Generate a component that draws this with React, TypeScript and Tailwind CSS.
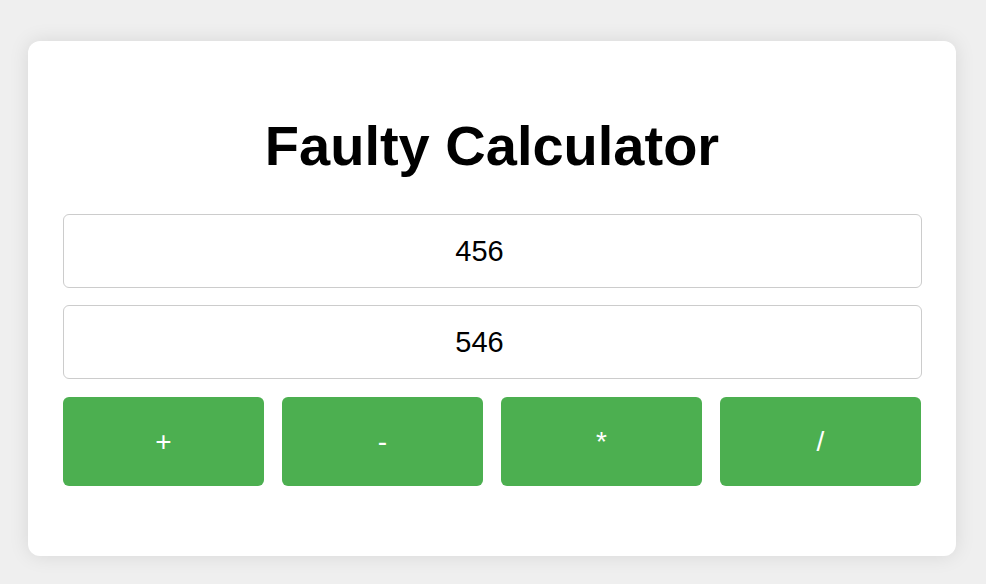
import { useState } from "react";

const ops = ["+", "-", "*", "/"];

export default function App() {
  const [a, setA] = useState("456");
  const [b, setB] = useState("546");

  return (
    <div
      className="min-h-screen bg-[#efefef] pt-[41px]"
      style={{ fontFamily: '"Liberation Sans", Arial, sans-serif' }}
    >
      <div className="ml-[28px] w-[928px] rounded-xl bg-white px-[35px] pt-[73px] pb-[70px] shadow-[0_0_20px_rgba(0,0,0,0.1)]">
        <h1 className="text-center text-[56px] font-bold leading-[64px] text-black">
          Faulty Calculator
        </h1>
        <div className="mt-[36px] flex flex-col gap-[17px]">
          <input
            value={a}
            onChange={(e) => setA(e.target.value)}
            className="h-[74px] w-[calc(100%+1px)] rounded-md border border-[#cccccc] pr-[26px] text-center text-[29px] text-black outline-none"
          />
          <input
            value={b}
            onChange={(e) => setB(e.target.value)}
            className="h-[74px] w-[calc(100%+1px)] rounded-md border border-[#cccccc] pr-[26px] text-center text-[29px] text-black outline-none"
          />
        </div>
        <div className="mt-[18px] flex gap-[18px]">
          {ops.map((op) => (
            <button
              key={op}
              className="h-[89px] flex-1 rounded-md bg-[#4caf50] text-[28px] text-white"
            >
              {op}
            </button>
          ))}
        </div>
      </div>
    </div>
  );
}
